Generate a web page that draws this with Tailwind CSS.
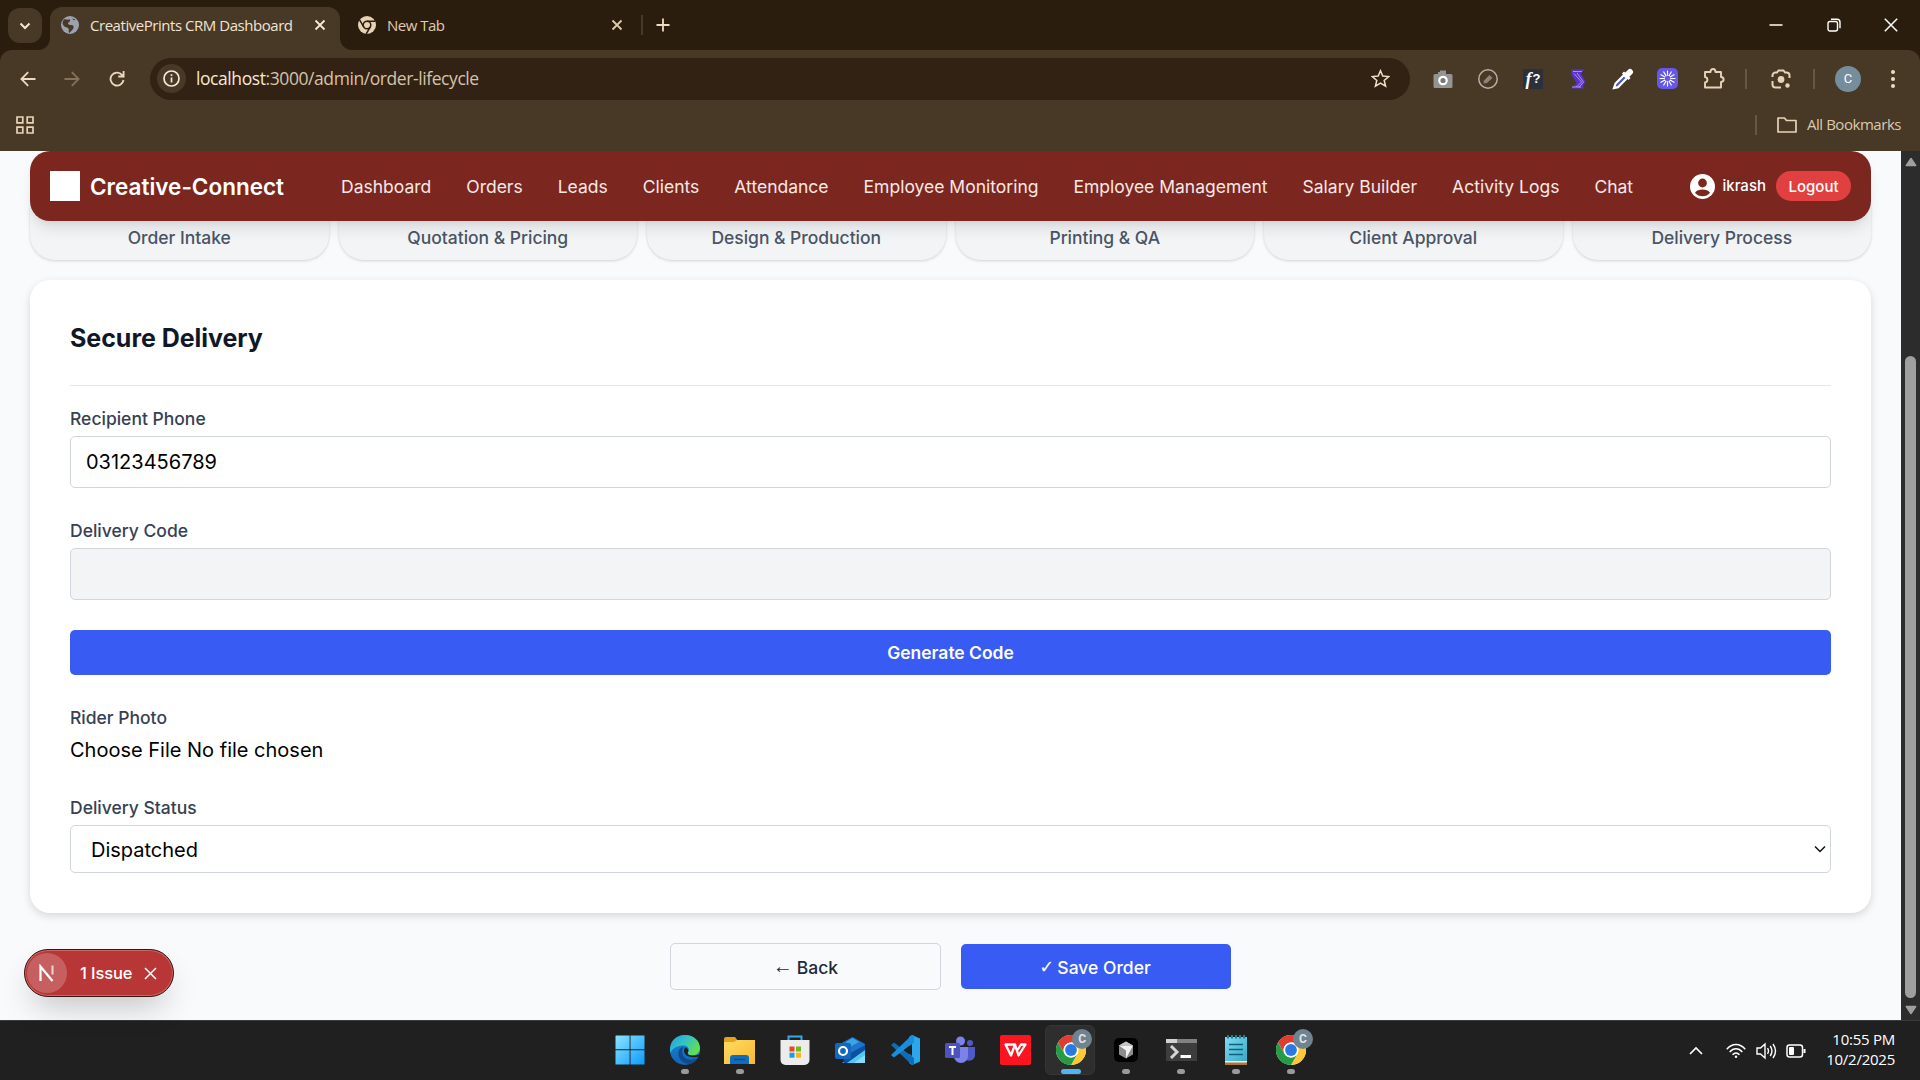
<!DOCTYPE html>
<html lang="en">
<head>
<meta charset="utf-8">
<title>CreativePrints CRM Dashboard</title>
<script src="https://cdn.jsdelivr.net/npm/@tailwindcss/browser@4"></script>
</head>
<body class="w-[1920px] h-[1080px] overflow-hidden flex flex-col bg-[#f9fafb] font-['Inter',sans-serif]">
<svg class="absolute w-0 h-0">
  <defs>
    <linearGradient id="win" x1="0" y1="0" x2="1" y2="1"><stop offset="0" stop-color="#8be4ff"/><stop offset="1" stop-color="#0a9bff"/></linearGradient>
    <linearGradient id="edgeTop" x1="0" y1="0" x2="1" y2=".6"><stop offset="0" stop-color="#1f9fe0"/><stop offset=".5" stop-color="#35c3c4"/><stop offset="1" stop-color="#62e04c"/></linearGradient>
    <linearGradient id="edgeBody" x1="0" y1="0" x2="0" y2="1"><stop offset="0" stop-color="#1787d8"/><stop offset="1" stop-color="#1264b8"/></linearGradient>
    <linearGradient id="folder" x1="0" y1="0" x2="1" y2="1"><stop offset="0" stop-color="#ffdb66"/><stop offset="1" stop-color="#f8b92c"/></linearGradient>
    <linearGradient id="pad" x1="0" y1="0" x2="1" y2="1"><stop offset="0" stop-color="#7fdcf0"/><stop offset="1" stop-color="#35a9c8"/></linearGradient>
    <symbol id="x" viewBox="0 0 12 12"><path d="M1.500 1.500l9 9m0-9l-9 9" fill="none" stroke="currentColor" stroke-width="1.800"/></symbol>
    <symbol id="chrome" viewBox="0 0 30 30">
      <circle cx="15" cy="15" r="15" fill="#fff"/>
      <path d="M2 7.500A15 15 0 0 1 28 7.500L15 7.500A7.500 7.500 0 0 0 8.500 18.700Z" fill="#e33b2e"/>
      <path d="M28 7.500A15 15 0 0 1 15 30L21.500 18.700A7.500 7.500 0 0 0 15 7.500Z" fill="#fcc934"/>
      <path d="M2 7.500A15 15 0 0 0 15 30L21.500 18.700A7.500 7.500 0 0 1 8.500 18.700Z" fill="#269b46"/>
      <circle cx="15" cy="15" r="7.400" fill="#fff"/><circle cx="15" cy="15" r="5.900" fill="#2a78e4"/>
    </symbol>
  </defs>
</svg>

<!-- Browser tab strip -->
<header class="h-[50px] shrink-0 bg-[#2b1d0e] flex items-end font-['Open_Sans',sans-serif]">
  <div class="w-[50px] h-[42px] pl-2 shrink-0 relative">
    <div class="w-[34px] h-[35px] rounded-xl bg-[#483826] flex items-center justify-center">
      <svg class="w-[12px] h-[12px]" viewBox="0 0 12 12"><path d="M1.500 3.500L6 8l4.500-4.500" fill="none" stroke="#f5e6d3" stroke-width="2"/></svg>
    </div>
    <svg class="absolute right-0 bottom-0 w-[12px] h-[12px]" viewBox="0 0 12 12"><path d="M12 0v12H0A12 12 0 0 0 12 0" fill="#483826"/></svg>
  </div>
  <div class="w-[290px] h-[43px] rounded-t-[12px] bg-[#483826] relative flex items-center pl-[11px] pr-[14px] pb-[7px] shrink-0">
    <svg class="w-[18px] h-[18px]" viewBox="0 0 18 18"><circle cx="9" cy="9" r="9" fill="#9aa3ad"/><path d="M3 3.500C5 3 6 4 8 3.500c2-.5 1 2-.5 3C6 7.500 8 9 10 9c2.500 0 3.500 2 2 4s-2.500 2.500-3.500 4C7 16 8.500 13 7 12c-1.500-.8-3.500-.5-5-3.500C1 7 2 4.500 3 3.500zM11 1.800c1 1.700 2.500 1.200 3.500 1.500C13 5 12 4 11 1.800z" fill="#483826"/></svg>
    <span class="ml-[11px] text-[15px] tracking-[-0.46px] text-[#f2e4d2] whitespace-nowrap grow">CreativePrints CRM Dashboard</span>
    <svg class="w-[12px] h-[12px] text-[#f5ead9]"><use href="#x"/></svg>
    <svg class="absolute left-full bottom-0 w-[12px] h-[12px]" viewBox="0 0 12 12"><path d="M0 0v12h12A12 12 0 0 1 0 0" fill="#483826"/></svg>
  </div>
  <div class="w-[302px] h-[43px] flex items-center pl-[18px] pr-[19px] pb-[7px] shrink-0 text-[#e0cbb0]">
    <svg class="w-[18px] h-[18px]" viewBox="0 0 18 18"><circle cx="9" cy="9" r="9" fill="#e8d2b5"/><circle cx="9" cy="9" r="3.800" fill="none" stroke="#2b1d0e" stroke-width="1.500"/><path d="M9 5.200h8.200M5.700 10.900L1.600 3.900M12.300 10.900L8.200 18" stroke="#2b1d0e" stroke-width="1.500"/></svg>
    <span class="ml-[11px] text-[15px] tracking-[-0.5px] grow">New Tab</span>
    <svg class="w-[12px] h-[12px]"><use href="#x"/></svg>
  </div>
  <div class="h-[43px] flex items-center pb-[7px] grow">
    <i class="w-[2px] h-[20px] bg-[#483826] mr-[13px] -ml-[1px]"></i>
    <svg class="w-[14px] h-[14px]" viewBox="0 0 14 14"><path d="M7 .5v13M.5 7h13" stroke="#f0dcc0" stroke-width="1.800"/></svg>
  </div>
  <div class="h-[50px] flex items-center gap-[43.500px] pr-[22px] text-white">
    <svg class="w-[14px] h-[14px]" viewBox="0 0 14 14"><path d="M.5 7h13" stroke="#fff" stroke-width="1.500"/></svg>
    <svg class="w-[14px] h-[14px]" viewBox="0 0 14 14" fill="none" stroke="#fff" stroke-width="1.400"><rect x="1" y="3.500" width="9.500" height="9.500" rx="2"/><path d="M4 1.200h6a3 3 0 0 1 3 3v6"/></svg>
    <svg class="w-[14px] h-[14px]" viewBox="0 0 14 14"><path d="M.8.8l12.400 12.400m0-12.400L.8 13.200" stroke="#fff" stroke-width="1.500"/></svg>
  </div>
</header>

<!-- Browser toolbar and bookmarks -->
<div class="shrink-0 bg-[#2b1d0e]">
 <div class="h-[101px] bg-[#483826] rounded-t-[12px] font-['Open_Sans',sans-serif]">
  <div class="h-[57px] flex items-center pl-[20px]">
    <svg class="w-[16px] h-[16px]" viewBox="0 0 16 16" fill="none" stroke="#ecd9bf" stroke-width="1.800"><path d="M15.500 8H1.500M8.200 1.200L1.400 8l6.800 6.800"/></svg>
    <svg class="w-[16px] h-[16px] ml-[28px]" viewBox="0 0 16 16" fill="none" stroke="#85725a" stroke-width="1.800"><path d="M.5 8h14M7.800 1.200L14.600 8l-6.800 6.800"/></svg>
    <svg class="w-[16px] h-[16px] ml-[29px]" viewBox="0 0 16 16" fill="none" stroke="#ecd9bf" stroke-width="1.800"><path d="M14.500 9A6.500 6.500 0 1 1 13 3.800L14.500 5.200M14.600 0v5.500H9.300"/></svg>
    <div class="ml-[25px] w-[1260px] h-[42px] rounded-full bg-[#322214] flex items-center pl-[7px] pr-[20px]">
      <span class="w-[29px] h-[29px] rounded-full bg-[#483826] flex items-center justify-center">
        <svg class="w-[17px] h-[17px]" viewBox="0 0 17 17" fill="none" stroke="#f5e8d6" stroke-width="1.700"><circle cx="8.500" cy="8.500" r="7.500"/><path d="M8.500 7.500v5M8.500 4.300v1.800"/></svg>
      </span>
      <span class="ml-[10px] grow text-[17.5px] tracking-[-0.42px] text-[#d5c3ab] whitespace-nowrap"><b class="font-normal text-[#f5e8d6]">localhost</b>:3000/admin/order-lifecycle</span>
      <svg class="w-[19px] h-[19px]" viewBox="0 0 19 19"><path d="M9.500 1.700l2.300 5.400 5.900.5-4.500 3.900 1.400 5.700-5.100-3-5.100 3 1.400-5.700L1.300 7.600l5.900-.5z" fill="none" stroke="#f0dfc8" stroke-width="1.500"/></svg>
    </div>
    <div class="flex items-center grow">
      <svg class="w-[20px] h-[20px] ml-[23px]" viewBox="0 0 20 20"><path d="M2 5h3V3h2V1.500h6V5h5a1.500 1.500 0 0 1 1.500 1.500v11A1.500 1.500 0 0 1 18 19H2a1.500 1.500 0 0 1-1.500-1.500v-11A1.500 1.500 0 0 1 2 5z" fill="#949494"/><circle cx="10" cy="11.500" r="3.700" fill="#777" stroke="#fff" stroke-width="2.200"/></svg>
      <svg class="w-[20px] h-[20px] ml-[25px]" viewBox="0 0 20 20"><circle cx="10" cy="10" r="9.200" fill="none" stroke="#bbaea0" stroke-width="1.500"/><path d="M5.500 14.500l.5-3 5.500-5.500 3 3-5.500 5z" fill="#8d8378"/></svg>
      <span class="w-[20px] h-[20px] ml-[25px] bg-[#2b303b] text-white flex items-center justify-center gap-px leading-none"><b class="text-[18px] italic font-['Liberation_Serif',serif]">f</b><b class="text-[13px] font-['Liberation_Sans',sans-serif]">?</b></span>
      <svg class="w-[20px] h-[20px] ml-[25px]" viewBox="0 0 20 20"><path d="M3 .5h13.500L13 4.500l4.500 8L15 17l1 2.500H3L8.500 14l-5-8z" fill="#5a32c8"/><path d="M5 2.500h9M6 4.500l7.500 8.500-5 5M9 4l6.500 9-4.500 5.500M4 18h9" fill="none" stroke="#b59cf0" stroke-width=".9"/></svg>
      <svg class="w-[22px] h-[22px] ml-[24px]" viewBox="0 0 22 22"><path d="M11 4.500l6.500 6.500" stroke="#fff" stroke-width="3"/><path d="M15 7l3-3" stroke="#fff" stroke-width="6" stroke-linecap="round"/><path d="M12 7L3.500 15.500 2 20l4-.8 9-9.200z" fill="#4b5cb8" stroke="#fff" stroke-width="2.200"/></svg>
      <svg class="w-[21px] h-[21px] ml-[23px]" viewBox="0 0 21 21"><rect width="21" height="21" rx="5" fill="#6558e8"/><g stroke="#fff" stroke-width="1.200" stroke-linecap="round"><path d="M10.500 3v15M3 10.500h15M6.750 4l7.500 13M14.250 4l-7.500 13M4 6.750l13 7.500M17 6.750l-13 7.500"/></g><circle cx="10.500" cy="10.500" r="2.700" fill="#6558e8"/></svg>
      <svg class="w-[22px] h-[22px] ml-[25px] mb-[2px]" viewBox="0 0 22 22"><path d="M2 5h5.500c0-4 5-4 5 0H18v5c3.500.3 3.500 4.700 0 5v5.500H2v-5c3.200-.5 3.200-5 0-5.500z" fill="none" stroke="#e8d3b6" stroke-width="1.900" stroke-linejoin="round"/></svg>
      <i class="w-[2px] h-[20px] bg-[#6a5640] ml-[20px]"></i>
      <svg class="w-[20px] h-[20px] ml-[24px]" viewBox="0 0 20 20"><path d="M1.500 8V6.500a3 3 0 0 1 3-3H6l1.500-2h5l1.500 2h1.500a3 3 0 0 1 3 3V9M1.500 12v3.500a3 3 0 0 0 3 3H10" fill="none" stroke="#e8d3b6" stroke-width="2"/><circle cx="10" cy="10.500" r="3.400" fill="#e8d3b6"/><circle cx="16.500" cy="16.500" r="2.200" fill="#e8d3b6"/></svg>
      <i class="w-[2px] h-[20px] bg-[#6a5640] ml-[22px]"></i>
      <span class="w-[26px] h-[26px] ml-[20px] rounded-full bg-[#768d9b] text-white text-[13px] flex items-center justify-center font-['Roboto',sans-serif]">C</span>
      <svg class="w-[4px] h-[20px] ml-[30px]" viewBox="0 0 4 20" fill="#f0dcc0"><circle cx="2" cy="3" r="2"/><circle cx="2" cy="10" r="2"/><circle cx="2" cy="17" r="2"/></svg>
    </div>
  </div>
  <div class="h-[36px] flex items-center justify-between pl-[16px] pr-[18px]">
    <svg class="w-[18px] h-[18px]" viewBox="0 0 18 18" fill="none" stroke="#e8d3b6" stroke-width="1.700"><path d="M1 1h5.800v5.800H1zM11.200 1H17v5.800h-5.800zM1 11.200h5.800V17H1zM11.200 11.200H17V17h-5.800z"/></svg>
    <div class="flex items-center">
      <i class="w-[2px] h-[20px] bg-[#6a5640] mr-[20px]"></i>
      <svg class="w-[20px] h-[16px] mr-[10px]" viewBox="0 0 20 16"><path d="M1 2.500V15h18V3.500H9.500L7.500 1H1z" fill="none" stroke="#e8d3b6" stroke-width="1.700" stroke-linejoin="round"/></svg>
      <span class="text-[15px] tracking-[-0.46px] pb-px mr-px text-[#dcc8ae]">All Bookmarks</span>
    </div>
  </div>
 </div>
</div>

<!-- Page -->
<div class="h-[869px] shrink-0 flex">
  <div class="w-[1901px] bg-[#f9fafb] relative">
    <nav class="relative z-10 mx-[30px] w-[1841px] h-[70px] rounded-[20px] bg-[#7b2720] shadow-lg flex items-center pl-[20px] pr-[20px] text-white">
      <div class="w-[30px] h-[30px] bg-white"></div>
      <span class="ml-[10px] w-[251px] pt-[2px] text-[22.5px] font-semibold whitespace-nowrap">Creative-Connect</span>
      <div class="flex gap-[35px] pt-[2px] text-[17.5px] text-[#f8e8e6] whitespace-nowrap grow">
        <a>Dashboard</a><a>Orders</a><a>Leads</a><a>Clients</a><a>Attendance</a><a>Employee Monitoring</a><a>Employee Management</a><a>Salary Builder</a><a>Activity Logs</a><a>Chat</a>
      </div>
      <svg class="w-[25px] h-[25px]" viewBox="0 0 25 25"><circle cx="12.500" cy="12.500" r="12.500" fill="#fff"/><circle cx="12.500" cy="9" r="4.400" fill="#7b2720"/><path d="M5 18.700c2.500-4.200 12.500-4.200 15 0-3.500 4.700-11.500 4.700-15 0z" fill="#7b2720"/></svg>
      <span class="ml-[7px] pt-px text-[15px] font-medium">ikrash</span>
      <span class="ml-[10px] w-[75px] h-[30px] rounded-full bg-[#e0403f] flex items-center justify-center pt-[2px] text-[15px] font-medium">Logout</span>
    </nav>
    <div class="grid grid-cols-6 gap-[10px] mx-[30px] w-[1841px] -mt-[15px] text-[17.5px] text-[#4a5565] text-center">
      <div class="h-[54px] pt-[19px] leading-[26px] rounded-b-[25px] bg-[#f3f4f6] font-medium tracking-[-0.02px] shadow-[0_1px_3px_rgba(0,0,0,0.16)]">Order Intake</div>
      <div class="h-[54px] pt-[19px] leading-[26px] rounded-b-[25px] bg-[#f3f4f6] font-medium tracking-[-0.02px] shadow-[0_1px_3px_rgba(0,0,0,0.16)]">Quotation &amp; Pricing</div>
      <div class="h-[54px] pt-[19px] leading-[26px] rounded-b-[25px] bg-[#f3f4f6] font-medium tracking-[-0.02px] shadow-[0_1px_3px_rgba(0,0,0,0.16)]">Design &amp; Production</div>
      <div class="h-[54px] pt-[19px] leading-[26px] rounded-b-[25px] bg-[#f3f4f6] font-medium tracking-[-0.02px] shadow-[0_1px_3px_rgba(0,0,0,0.16)]">Printing &amp; QA</div>
      <div class="h-[54px] pt-[19px] leading-[26px] rounded-b-[25px] bg-[#f3f4f6] font-medium tracking-[-0.02px] shadow-[0_1px_3px_rgba(0,0,0,0.16)]">Client Approval</div>
      <div class="h-[54px] pt-[19px] leading-[26px] rounded-b-[25px] bg-[#f3f4f6] font-medium tracking-[-0.02px] shadow-[0_1px_3px_rgba(0,0,0,0.16)]">Delivery Process</div>
    </div>
    <main class="mx-[30px] w-[1841px] mt-[20px] h-[633px] rounded-[20px] bg-white shadow-[0_3px_8px_rgba(0,0,0,0.14)] px-[40px] pt-[40px] flex flex-col">
      <h2 class="h-[66px] leading-[37px] text-[25px] font-bold tracking-[-0.04px] text-[#101828] border-b border-[#e5e7eb]">Secure Delivery</h2>
      <label class="mt-[20px] h-[30px] leading-[25px] text-[17.5px] font-medium text-[#364153]">Recipient Phone</label>
      <div class="h-[52px] rounded-[5px] border border-[#d1d5dc] px-[15px] leading-[51px] text-[20px] text-black">03123456789</div>
      <label class="mt-[30px] h-[30px] leading-[25px] text-[17.5px] font-medium text-[#364153]">Delivery Code</label>
      <div class="h-[52px] rounded-[5px] border border-[#d1d5dc] bg-[#f3f4f6]"></div>
      <div class="mt-[30px] h-[45px] rounded-[5px] bg-[#385bf3] text-white text-[17.5px] pt-[2px] font-semibold tracking-[-0.02px] flex items-center justify-center">Generate Code</div>
      <label class="mt-[30px] h-[30px] leading-[25px] text-[17.5px] font-medium text-[#364153]">Rider Photo</label>
      <div class="h-[30px] leading-[30px] text-[20px] text-black">Choose File No file chosen</div>
      <label class="mt-[30px] h-[30px] leading-[25px] text-[17.5px] font-medium text-[#364153]">Delivery Status</label>
      <div class="h-[48px] rounded-[5px] border border-[#d1d5dc] pl-[20px] pr-[4px] text-[20px] text-black flex items-center justify-between"><span class="pt-px">Dispatched</span>
        <svg class="w-[12px] h-[12px]" viewBox="0 0 12 12"><path d="M1 3.500l5 5 5-5" fill="none" stroke="#111" stroke-width="1.500"/></svg>
      </div>
    </main>
    <div class="mt-[30px] flex items-center justify-center gap-[20px] text-[17.5px] font-medium">
      <div class="w-[271px] h-[47px] pt-[2px] rounded-[5px] border border-[#d1d5dc] text-[#1e2939] flex items-center justify-center gap-[4px] leading-none"><span class="font-normal text-[20px] pb-[4px] font-['Liberation_Sans',sans-serif]">←</span><span>Back</span></div>
      <div class="w-[270px] h-[45px] pt-[2px] rounded-[5px] bg-[#385bf3] text-white flex items-center justify-center gap-[3px] leading-none"><span class="font-normal text-[18px] pb-[2px] -ml-[2px] font-['DejaVu_Sans',sans-serif]">✓</span><span>Save Order</span></div>
    </div>
    <div class="absolute left-[24px] top-[798px] w-[150px] h-[48px] rounded-full bg-[#b93636] border border-[#3a1414] shadow-[inset_0_0_0_1px_rgba(255,255,255,0.25),0_16px_32px_-8px_rgba(0,0,0,0.24)] flex items-center pl-[2px] text-white">
      <span class="w-[40px] h-[40px] rounded-full bg-[#c66060] flex items-center justify-center">
        <svg class="w-[18px] h-[18px]" viewBox="0 0 18 18"><path d="M2.500 17V2.500L14.500 17" fill="none" stroke="#fff" stroke-width="2.200"/><path d="M14.500 1.500v9" stroke="#f0d4d4" stroke-width="2"/></svg>
      </span>
      <span class="ml-[13px] w-[52px] text-[16.5px] font-medium tracking-[-0.1px] whitespace-nowrap">1 Issue</span>
      <svg class="ml-[12px] w-[13px] h-[13px]" viewBox="0 0 13 13"><path d="M1 1l11 11m0-11L1 12" stroke="#fff" stroke-width="1.500"/></svg>
    </div>
  </div>
  <div class="w-[19px] bg-[#2c2c2c] flex flex-col items-center">
    <svg class="w-[12px] h-[10px] mt-[6px]" viewBox="0 0 12 10"><path d="M6 1.500l4.700 7H1.300z" fill="#9f9f9f" stroke="#9f9f9f" stroke-width="1.500" stroke-linejoin="round"/></svg>
    <div class="w-[11px] h-[642px] mt-[189px] rounded-full bg-[#9f9f9f]"></div>
    <svg class="w-[12px] h-[10px] mt-[7px]" viewBox="0 0 12 10"><path d="M6 8.500l4.700-7H1.300z" fill="#9f9f9f" stroke="#9f9f9f" stroke-width="1.500" stroke-linejoin="round"/></svg>
  </div>
</div>

<!-- Taskbar -->
<footer class="h-[60px] shrink-0 bg-[#202020] border-t border-[#3a3a3a] flex items-center text-white">
  <div class="ml-[602px] w-[717px] grid grid-cols-13 h-full">
    <div class="flex flex-col items-center pt-[14px]"><svg class="w-[30px] h-[30px]" viewBox="0 0 30 30"><path d="M1 .5h13.600v13.700H.5V1zM15.500.5h14v13.700h-14zM.5 15.200h14.100v14.300H.5zM15.500 15.200h14v14.300h-14z" fill="url(#win)"/></svg></div>
    <div class="flex flex-col items-center pt-[14px]"><svg class="w-[30px] h-[30px]" viewBox="0 0 30 30"><circle cx="15" cy="15" r="15" fill="url(#edgeBody)"/><path d="M0 13C1 5 7 0 15 0c9 0 15 6 15 13 0 5-4 7.500-8 7.500-3 0-5-1.500-4-3 2-3 .5-7-4.500-7C8 10.500 3 12.500.3 18Q-.2 15 0 13z" fill="url(#edgeTop)"/><path d="M9 15c-2.500 7 3 14 10.500 14 3.500-1 6-3 8-6-6 3-13.500 2-15-4C11.800 15 12.500 13 14 12c-2 0-4 1-5 3z" fill="#114a8b"/><path d="M15.500 12.500c-2 1.500-2 5 0 7 3 3 8.500 3.300 14 2l-1 3 3-1v-5c-3 2-7 2.300-10 2-3-.3-4.500-1.500-3.700-3 1-2 .2-4.500-2.300-5z" fill="#202020"/></svg><i class="w-[8px] h-[5px] mt-[4px] rounded-full bg-[#9a9a9a]"></i></div>
    <div class="flex flex-col items-center pt-[14px]"><svg class="w-[31px] h-[30px]" viewBox="0 0 31 30"><path d="M0 4a2 2 0 0 1 2-2h9l3 4v8H0z" fill="#e3a21a"/><path d="M0 7h10l3-2h18v24H0z" fill="url(#folder)"/><path d="M6 29v-6a3 3 0 0 1 3-3h13a3 3 0 0 1 3 3v6z" fill="#0d6ebd"/><path d="M10 24.500h11" stroke="#0a4f8c" stroke-width="1.500"/></svg><i class="w-[8px] h-[5px] mt-[4px] rounded-full bg-[#9a9a9a]"></i></div>
    <div class="flex flex-col items-center pt-[14px]"><svg class="w-[30px] h-[30px]" viewBox="0 0 30 30"><path d="M8.500 6V1.500h13V6" fill="none" stroke="#38a8e0" stroke-width="2"/><path d="M.5 5h29v20a5 5 0 0 1-5 5h-19a5 5 0 0 1-5-5z" fill="#ececec"/><path d="M9.500 11.500h5v5h-5z" fill="#e74825"/><path d="M16 11.500h5v5h-5z" fill="#79b51c"/><path d="M9.500 17.700h5v5h-5z" fill="#1b9de2"/><path d="M16 17.700h5v5h-5z" fill="#f7b51c"/></svg></div>
    <div class="flex flex-col items-center pt-[14px]"><svg class="w-[30px] h-[30px]" viewBox="0 0 30 30"><path d="M5 9l12.500-7L30 9v6L17 24H5z" fill="#1b76cf"/><path d="M11 7l6.500-4L24 7 13 13z" fill="#37a5e8"/><path d="M7 28L30 13v12a3 3 0 0 1-3 3z" fill="#50c8ef"/><path d="M8 22l22-12v5L12 28H9z" fill="#0f4f9e"/><path d="M19 28L30 20v8z" fill="#86dcf5"/><rect y="8" width="16" height="16" rx="2" fill="#1068bf"/><circle cx="8" cy="16" r="4" fill="none" stroke="#fff" stroke-width="2.200"/></svg></div>
    <div class="flex flex-col items-center pt-[14px]"><svg class="w-[31px] h-[30px]" viewBox="0 0 31 30"><path d="M22 0l8 3.500v23L22 30l-3-2V2z" fill="#2ba7ec"/><path d="M1 10l3-2.500L24 23v6.500L22 30z" fill="#0a6fb8"/><path d="M1 20l3 2.500L24 7.500V.5L22 0z" fill="#1c8ddb"/><path d="M22 9v12l-8-6z" fill="#202020"/></svg></div>
    <div class="flex flex-col items-center pt-[14px]"><svg class="w-[30px] h-[30px]" viewBox="0 0 30 30"><circle cx="25" cy="8" r="3" fill="#5059c9"/><path d="M18 12h12v8a6 6 0 0 1-9 5z" fill="#5059c9"/><circle cx="15.500" cy="6" r="4.500" fill="#7b83eb"/><path d="M9 12h14v9a7 7 0 0 1-14 0z" fill="#7b83eb"/><rect y="8" width="15" height="15" rx="1.500" fill="#4b53bc"/><path d="M4 12h7M7.500 12v8" stroke="#fff" stroke-width="2"/></svg></div>
    <div class="flex flex-col items-center pt-[14px]"><svg class="w-[31px] h-[30px]" viewBox="0 0 31 30"><rect width="31" height="30" rx="2" fill="#fb1520"/><path d="M5.500 9.500H15L11 20.500z" fill="none" stroke="#fff" stroke-width="2.300" stroke-linejoin="round"/><path d="M15 9.500l3.500 11 7-11h-4.500l-3.500 5.500" fill="none" stroke="#fff" stroke-width="2.300" stroke-linejoin="round"/></svg></div>
    <div class="relative flex flex-col items-center pt-[14px]"><div class="absolute left-[2px] top-[4px] w-[50px] h-[50px] rounded-[6px] bg-[#2e2e2e] border border-[#363636]"></div><svg class="relative w-[30px] h-[30px]"><use href="#chrome"/></svg><span class="absolute left-[29px] top-[8px] w-[20px] h-[20px] rounded-full bg-[#6f8490] text-[#dfe5e8] text-[12px] font-bold flex items-center justify-center font-['Roboto',sans-serif]">C</span><i class="relative w-[20px] h-[5px] mt-[4px] rounded-full bg-[#4cb8ee]"></i></div>
    <div class="flex flex-col items-center pt-[14px]"><svg class="w-[30px] h-[30px]" viewBox="0 0 30 30"><rect x="3" y="3" width="24" height="24" rx="5" fill="#000"/><path d="M15 6.500l7 4v9l-7 4-7-4v-9z" fill="#8d8d8d"/><path d="M8 10.500h14l-7 13v-8z" fill="#f2f2f2"/><path d="M15 6.500l7 4H8z" fill="#c6c6c6"/></svg><i class="w-[8px] h-[5px] mt-[4px] rounded-full bg-[#9a9a9a]"></i></div>
    <div class="flex flex-col items-center pt-[14px]"><svg class="w-[31px] h-[30px]" viewBox="0 0 31 30"><path d="M0 4h31v22H0z" fill="#3d3d3d"/><path d="M0 4h31v4H0z" fill="#828282"/><path d="M0 4h11v4H0z" fill="#d2d2d2"/><path d="M5 11l6 6-6 6" fill="none" stroke="#d5d5d5" stroke-width="3"/><path d="M14.500 21.500H25" stroke="#fff" stroke-width="3"/></svg><i class="w-[8px] h-[5px] mt-[4px] rounded-full bg-[#9a9a9a]"></i></div>
    <div class="flex flex-col items-center pt-[14px]"><svg class="w-[24px] h-[30px]" viewBox="0 0 24 30"><path d="M1 26h22v4H1z" fill="#b5713c"/><path d="M1 2h22v25H1z" fill="url(#pad)"/><path d="M1 26h22v1.500H1z" fill="#e8f4f6"/><path d="M5 9.500h14M5 14.500h14M5 19.500h14" stroke="#13617f" stroke-width="1.700"/><path d="M4 0v3.500M8 0v3.500M12 0v3.500M16 0v3.500M20 0v3.500" stroke="#1580a6" stroke-width="2"/></svg><i class="w-[8px] h-[5px] mt-[4px] rounded-full bg-[#9a9a9a]"></i></div>
    <div class="relative flex flex-col items-center pt-[14px]"><svg class="w-[30px] h-[30px]"><use href="#chrome"/></svg><span class="absolute left-[29px] top-[8px] w-[20px] h-[20px] rounded-full bg-[#6f8490] text-[#dfe5e8] text-[12px] font-bold flex items-center justify-center font-['Roboto',sans-serif]">C</span><i class="w-[8px] h-[5px] mt-[4px] rounded-full bg-[#9a9a9a]"></i></div>
  </div>
  <div class="grow flex items-center justify-end pr-[25px] font-['Open_Sans',sans-serif]">
    <svg class="w-[14px] h-[14px]" viewBox="0 0 14 14"><path d="M1 10l6-6 6 6" fill="none" stroke="#fff" stroke-width="1.700"/></svg>
    <svg class="w-[20px] h-[16px] ml-[23px]" viewBox="0 0 20 16" fill="none" stroke="#fff" stroke-width="1.500"><path d="M.8 6.200C6-.2 14-.2 19.200 6.200M3.700 9c3.700-4.300 8.900-4.300 12.600 0M6.500 11.700c2.200-2.400 4.800-2.400 7 0"/><circle cx="10" cy="13.700" r="1.200" fill="#fff" stroke="none"/></svg>
    <svg class="w-[21px] h-[18px] ml-[10px]" viewBox="0 0 21 18" fill="none" stroke="#fff" stroke-width="1.400"><path d="M1 6h3.500L9 2v14l-4.500-4H1zM11.500 6.200q2 2.800 0 5.600M14.200 4q3.500 5 0 10M17 2q5 7 0 14"/></svg>
    <svg class="w-[20px] h-[14px] ml-[9px] mr-[20px]" viewBox="0 0 20 14"><rect x="1" y="1" width="15.500" height="12" rx="2.500" fill="none" stroke="#fff" stroke-width="1.500"/><rect x="3" y="3" width="5" height="8" rx="1" fill="#fff"/><path d="M17.500 5h2v4h-2z" fill="#fff"/></svg>
    <div class="text-right text-[15px] leading-[20px] tracking-[-0.25px] -mt-[3px]">10:55 PM<br>10/2/2025</div>
  </div>
</footer>
</body>
</html>
